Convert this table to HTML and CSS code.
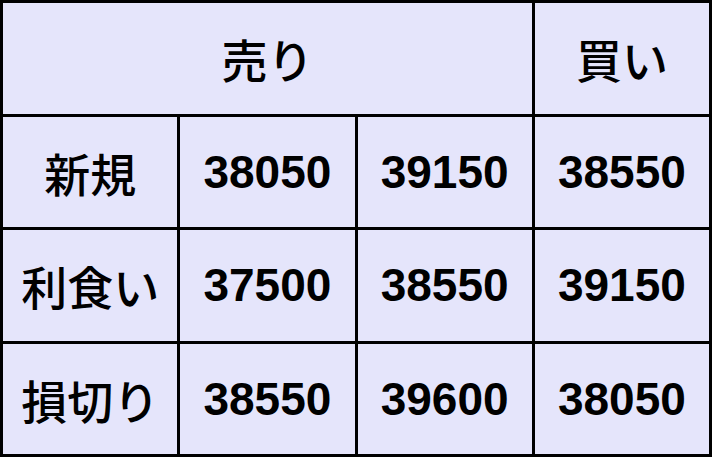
FILE: index.html
```html
<!DOCTYPE html>
<html lang="ja">
<head>
<meta charset="utf-8">
<link rel="stylesheet" href="styles.css">
</head>
<body>
<table class="grid">
  <tr class="row">
    <th class="cell head" colspan="3">売り</th>
    <th class="cell head">買い</th>
  </tr>
  <tr class="row">
    <th class="cell label">新規</th>
    <td class="cell">38050</td>
    <td class="cell">39150</td>
    <td class="cell">38550</td>
  </tr>
  <tr class="row">
    <th class="cell label">利食い</th>
    <td class="cell">37500</td>
    <td class="cell">38550</td>
    <td class="cell">39150</td>
  </tr>
  <tr class="row">
    <th class="cell label">損切り</th>
    <td class="cell">38550</td>
    <td class="cell">39600</td>
    <td class="cell">38050</td>
  </tr>
</table>
</body>
</html>
```

FILE: styles.css
```css
html, body {
  margin: 0;
  padding: 0;
  background: #e5e5fb;
}
.grid {
  width: 712px;
  height: 457px;
  border-collapse: collapse;
  table-layout: fixed;
  background: #e5e5fb;
  font-family: "Liberation Sans", "Noto Sans CJK JP", sans-serif;
  font-weight: bold;
  font-size: 46px;
  color: #000;
}
.cell {
  border: 3px solid #000;
  text-align: center;
  vertical-align: middle;
  padding: 0;
  font-weight: bold;
}
.head,
.label {
  font-weight: 500;
}
.row {
  height: 25%;
}
```
